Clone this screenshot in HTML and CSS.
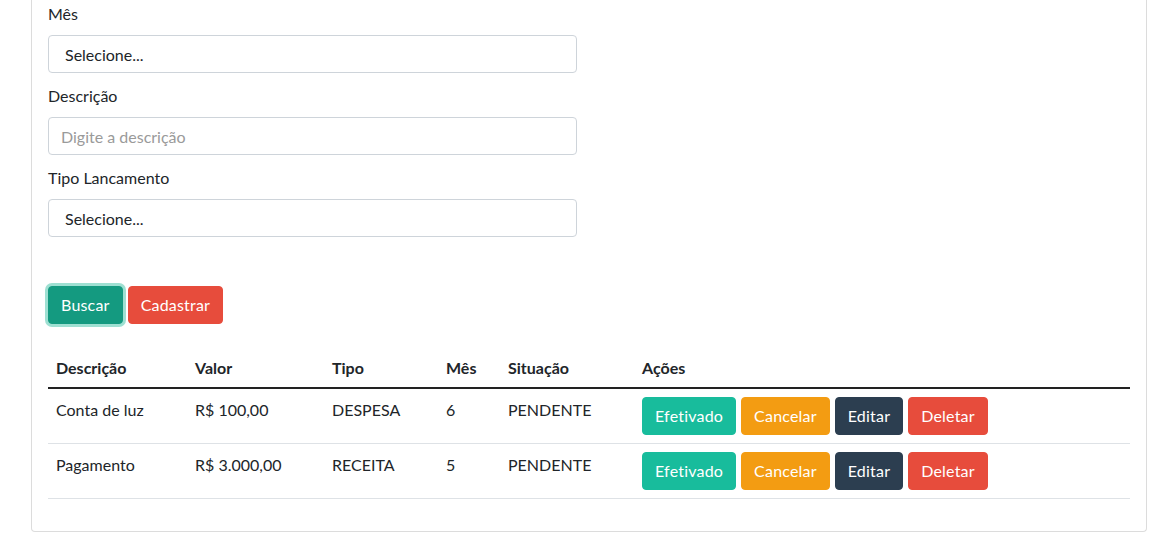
FILE: index.html
```html
<!DOCTYPE html>
<html lang="pt-BR">
<head>
<meta charset="utf-8">
<title>Lançamentos</title>
<link rel="stylesheet" href="styles.css">
</head>
<body>
<div class="card">
  <div class="form-group">
    <label class="label">Mês</label>
    <select class="control select"><option>Selecione...</option></select>
  </div>
  <div class="form-group">
    <label class="label">Descrição</label>
    <input class="control input" type="text" placeholder="Digite a descrição">
  </div>
  <div class="form-group">
    <label class="label">Tipo Lancamento</label>
    <select class="control select"><option>Selecione...</option></select>
  </div>
  <div class="actions-bar">
    <button class="btn btn-success focused">Buscar</button>
    <button class="btn btn-danger">Cadastrar</button>
  </div>
  <table class="table">
    <thead>
      <tr>
        <th class="c-desc">Descrição</th>
        <th class="c-valor">Valor</th>
        <th class="c-tipo">Tipo</th>
        <th class="c-mes">Mês</th>
        <th class="c-sit">Situação</th>
        <th>Ações</th>
      </tr>
    </thead>
    <tbody>
      <tr>
        <td>Conta de luz</td>
        <td>R$ 100,00</td>
        <td>DESPESA</td>
        <td>6</td>
        <td>PENDENTE</td>
        <td class="cell-actions"><div class="btns">
          <button class="btn btn-teal">Efetivado</button>
          <button class="btn btn-warning">Cancelar</button>
          <button class="btn btn-primary">Editar</button>
          <button class="btn btn-danger">Deletar</button>
        </div></td>
      </tr>
      <tr>
        <td>Pagamento</td>
        <td>R$ 3.000,00</td>
        <td>RECEITA</td>
        <td>5</td>
        <td>PENDENTE</td>
        <td class="cell-actions"><div class="btns">
          <button class="btn btn-teal">Efetivado</button>
          <button class="btn btn-warning">Cancelar</button>
          <button class="btn btn-primary">Editar</button>
          <button class="btn btn-danger">Deletar</button>
        </div></td>
      </tr>
    </tbody>
  </table>
</div>
</body>
</html>
```
FILE: styles.css
```css
* { box-sizing: border-box; }
html, body { margin: 0; padding: 0; background: #fff; }
body {
  font-family: Lato, "Liberation Sans", sans-serif;
  font-size: 16px;
  line-height: 22px;
  color: #212529;
}
.card {
  margin: 0 20px 0 31px;
  border: 1px solid #dcdcdc;
  border-top: none;
  border-radius: 0 0 4px 4px;
  padding: 3px 16px 16px 16px;
  height: 532px;
}
.form-group { margin-bottom: 12px; }
.label { display: block; margin-bottom: 10px; line-height: 22px; }
.control {
  display: block;
  width: 529px;
  height: 38px;
  border: 1px solid #ced4da;
  border-radius: 4px;
  background: #fff;
  font-family: inherit;
  font-size: 16px;
  color: #212529;
  outline: none;
}
.select { appearance: none; -webkit-appearance: none; padding: 0 16px; }
.input { padding: 0 12px; }
.input::placeholder { color: #9a9a9a; }
.actions-bar { display: flex; gap: 5px; margin-top: 49px; margin-bottom: 25px; }
.btn {
  font-family: inherit;
  font-size: 16px;
  line-height: 22px;
  letter-spacing: 0.2px;
  padding: 7px 12px;
  border: 1px solid transparent;
  border-radius: 4px;
  color: #fff;
  cursor: pointer;
}
.btn-success { background: #149a80; border-color: #149a80; }
.btn-success.focused { box-shadow: 0 0 0 3px #9ee0d2; }
.btn-danger { background: #e74c3c; border-color: #e74c3c; }
.btn-teal { background: #18bc9c; border-color: #18bc9c; }
.btn-warning { background: #f39c12; border-color: #f39c12; }
.btn-primary { background: #2c3e50; border-color: #2c3e50; }
.table { width: 100%; border-collapse: collapse; }
.table th {
  text-align: left;
  font-weight: 700;
  padding: 8px 8px;
  border-bottom: 2px solid #222;
  vertical-align: bottom;
}
.table td {
  padding: 10px 8px 8px;
  border-bottom: 1px solid #dee2e6;
  vertical-align: top;
}
.table td.cell-actions { padding: 8px; }
.c-desc { width: 139px; }
.c-valor { width: 137px; }
.c-tipo { width: 114px; }
.c-mes { width: 62px; }
.c-sit { width: 134px; }
.btns { display: flex; gap: 5px; }
```
